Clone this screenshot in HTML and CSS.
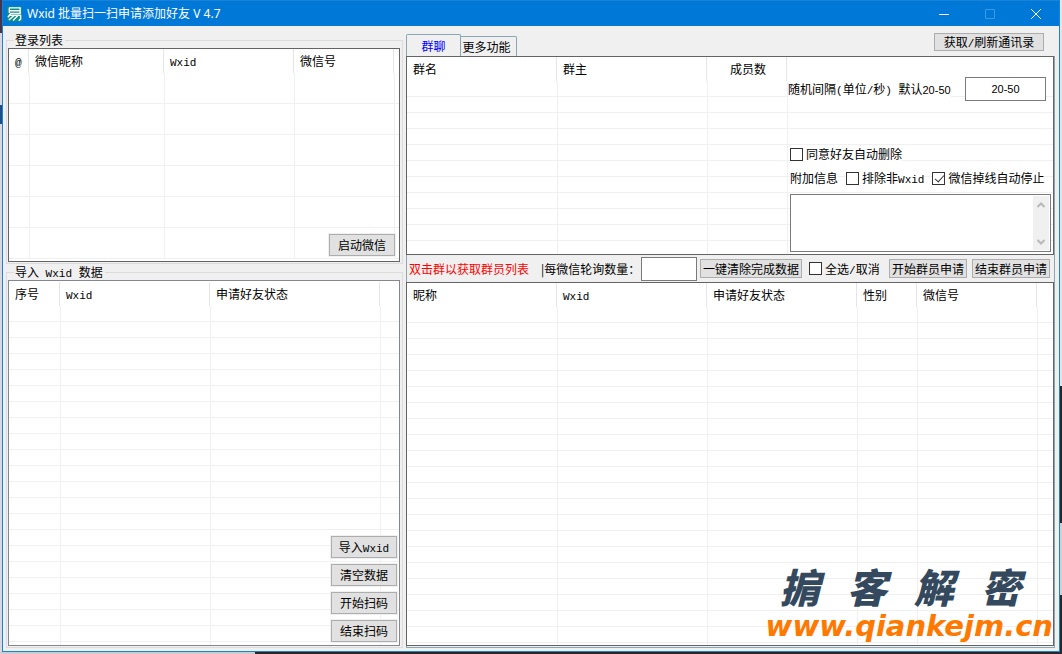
FILE: index.html
```html
<!DOCTYPE html>
<html lang="zh-CN">
<head>
<meta charset="utf-8">
<title>Wxid 批量扫一扫申请添加好友 V 4.7</title>
<link rel="stylesheet" href="styles.css">
</head>
<body>
<div class="window">
  <header class="titlebar">
    <svg class="app-icon" viewBox="0 0 16 16" aria-hidden="true">
      <rect width="16" height="16" fill="#0b8f86"/>
      <path d="M2 1.500H14V7.500H3.500M3 4.500H14M2.500 1.500V7M4 7.500L1 11.500M3 9.500H14.500V13.500L12.500 15M7.500 9.500L2 14.500M11.500 9.500L6.500 15" fill="none" stroke="#fff" stroke-width="1.5"/>
    </svg>
    <h1 class="title">Wxid 批量扫一扫申请添加好友 V 4.7</h1>
    <div class="caption-buttons">
      <button class="caption" aria-label="最小化"><svg viewBox="0 0 10 10"><path d="M0 5.5H10"/></svg></button>
      <button class="caption dim" aria-label="最大化" disabled><svg viewBox="0 0 10 10"><path d="M.5 .5H9.5V9.5H.5Z"/></svg></button>
      <button class="caption" aria-label="关闭"><svg viewBox="0 0 10 10"><path d="M0 0L10 10M10 0L0 10"/></svg></button>
    </div>
  </header>

  <main class="content">
    <div class="sidebar">
      <fieldset class="group">
        <legend>登录列表</legend>
        <div class="list logins">
          <table class="grid tall" data-rows="6">
            <colgroup><col class="w21"><col class="w135"><col class="w130"><col class="w100"><col></colgroup>
            <thead><tr><th><span class="half">@</span></th><th>微信昵称</th><th><span class="half">Wxid</span></th><th>微信号</th><th></th></tr></thead>
            <tbody></tbody>
          </table>
          <button class="btn launch">启动微信</button>
        </div>
      </fieldset>
      <fieldset class="group">
        <legend>导入<span class="half"> Wxid </span>数据</legend>
        <div class="list imports">
          <table class="grid" data-rows="22">
            <colgroup><col class="w52"><col class="w150"><col class="w170"><col></colgroup>
            <thead><tr><th>序号</th><th><span class="half">Wxid</span></th><th>申请好友状态</th><th></th></tr></thead>
            <tbody></tbody>
          </table>
          <div class="actions">
            <button class="btn">导入<span class="half">Wxid</span></button>
            <button class="btn">清空数据</button>
            <button class="btn">开始扫码</button>
            <button class="btn">结束扫码</button>
          </div>
        </div>
      </fieldset>
    </div>

    <div class="workspace">
      <div class="tabs">
        <button class="tab active">群聊</button>
        <button class="tab">更多功能</button>
        <button class="btn refresh">获取<span class="half">/</span>刷新通讯录</button>
      </div>
      <section class="panel">
        <div class="list groups">
          <table class="grid" data-rows="11">
            <colgroup><col class="w151"><col class="w150"><col class="w80"><col></colgroup>
            <thead><tr><th>群名</th><th>群主</th><th class="center">成员数</th><th></th></tr></thead>
            <tbody></tbody>
          </table>
          <form class="settings">
            <div class="setting interval">
              <label for="interval">随机间隔<span class="half">(</span>单位<span class="half">/</span>秒<span class="half">)&nbsp;</span>默认<span class="num">20-50</span></label>
              <input class="box num" id="interval" type="text" value="20-50">
            </div>
            <div class="setting">
              <label class="check"><input type="checkbox">同意好友自动删除</label>
            </div>
            <div class="setting extras">
              <label for="extra">附加信息</label>
              <label class="check"><input type="checkbox"><span>排除非<span class="half">Wxid</span></span></label>
              <label class="check"><input type="checkbox" checked>微信掉线自动停止</label>
            </div>
            <div class="memo">
              <textarea id="extra"></textarea>
              <div class="scroll">
                <button type="button" aria-label="向上"><svg viewBox="0 0 8 6"><path d="M.5 5L4 1.5L7.500 5"/></svg></button>
                <button type="button" aria-label="向下"><svg viewBox="0 0 8 6"><path d="M.5 1L4 4.500L7.500 1"/></svg></button>
              </div>
            </div>
          </form>
        </div>

        <div class="toolbar">
          <span class="hint">双击群以获取群员列表</span>
          <label for="poll">|每微信轮询数量：</label>
          <input class="box poll" id="poll" type="text">
          <button class="btn clear">一键清除完成数据</button>
          <label class="check all"><input type="checkbox"><span>全选<span class="half">/</span>取消</span></label>
          <button class="btn apply">开始群员申请</button>
          <button class="btn apply">结束群员申请</button>
        </div>

        <div class="list members">
          <table class="grid" data-rows="22">
            <colgroup><col class="w151"><col class="w150"><col class="w150"><col class="w60"><col class="w120"><col></colgroup>
            <thead><tr><th>昵称</th><th><span class="half">Wxid</span></th><th>申请好友状态</th><th>性别</th><th>微信号</th><th></th></tr></thead>
            <tbody></tbody>
          </table>
          <div class="brand">
            <div class="brand-name"><span>掮</span><span>客</span><span>解</span><span>密</span></div>
            <div class="brand-url">www.qiankejm.cn</div>
          </div>
        </div>
      </section>
    </div>
  </main>
</div>
<script src="script.js"></script>
</body>
</html>
```

FILE: styles.css
```css
* { box-sizing: border-box; }

body {
  margin: 0;
  height: 100vh;
  display: flex;
  padding: 0 2px 2px;
  overflow: hidden;
  background:
    linear-gradient(#c9ccd0, #c9ccd0) no-repeat left bottom / 24% 2px,
    linear-gradient(#2b2628, #2b2628) no-repeat right bottom / 76% 2px,
    linear-gradient(#e4e4e4 59%, #2b2628 59% 80%, #d0d0d0 80% 91%, #2b2628 91%) no-repeat right top / 2px 100%,
    linear-gradient(#43364a 5%, #d6d9dd 5% 16%, #1b4f86 16% 19%, #d6d9dd 19%);
  color: #000;
  font: 12px/16px "Noto Sans CJK SC", sans-serif;
}

button, input, textarea {
  font: inherit;
  color: inherit;
  margin: 0;
  padding: 0;
  border-radius: 0;
}

.half { font-family: "Liberation Mono", monospace; font-size: 11px; line-height: 12px; }
.num { font-family: "Liberation Sans", sans-serif; font-size: 11px; }

.window {
  flex: 1;
  min-width: 0;
  display: flex;
  flex-direction: column;
  border: 1px solid #1883d7;
  background: #f0f0f0;
}

.titlebar {
  flex: none;
  display: flex;
  align-items: center;
  height: 25px;
  padding-left: 4px;
  background: #0078d7;
  color: #fff;
}
.app-icon { width: 15px; height: 16px; }
.title {
  margin: 0 0 0 5px;
  font: 12px/16px "Noto Sans", "Noto Sans CJK SC", sans-serif;
}
.caption-buttons { display: flex; margin-left: auto; }
.caption {
  width: 46px;
  height: 25px;
  display: grid;
  place-items: center;
  border: 0;
  background: none;
}
.caption svg { width: 10px; height: 10px; fill: none; stroke: #fff; overflow: visible; }
.caption.dim svg { stroke: #3c98e0; }

.content {
  flex: 1;
  min-height: 0;
  display: grid;
  grid-template-columns: 397px minmax(0, 1fr);
  gap: 3px;
  padding: 0 4px 3px 3px;
}

.sidebar {
  display: grid;
  grid-template-rows: auto minmax(0, 1fr);
  min-height: 0;
  padding-top: 6px;
}
.group {
  display: flex;
  flex-direction: column;
  min-width: 0;
  min-height: 0;
  margin: 0;
  padding: 0 2px 1px 1px;
  border: 1px solid #dcdcdc;
}
.group legend { height: 16px; margin-left: 6px; padding: 0 2px 0 1px; }

.list {
  position: relative;
  overflow: hidden;
  min-height: 0;
  border: 1px solid #646464;
  background: #fff;
}
.logins { padding-bottom: 2px; }
.imports { flex: 1; padding-top: 1px; border-color: #828790; }

.grid { width: 100%; table-layout: fixed; border-collapse: separate; border-spacing: 0; }
.grid th {
  height: 24px;
  padding: 0 5px;
  font-weight: normal;
  text-align: left;
  white-space: nowrap;
  background: linear-gradient(#e5e5e5, #e5e5e5) no-repeat right 1px top 0 / 1px 100%;
}
.grid th:last-child { background: none; }
.grid th:first-child { padding-left: 6px; }
.grid .center { text-align: center; }
.grid td { height: 16px; padding: 0; border: 0 solid #f0f0f0; border-width: 0 1px 1px 0; }
.grid td:last-child { border-right: 0; }
.tall td { height: 31px; }
.w21 { width: 21px; }
.w52 { width: 52px; }
.w60 { width: 60px; }
.w80 { width: 80px; }
.w100 { width: 100px; }
.w120 { width: 120px; }
.w130 { width: 130px; }
.w135 { width: 135px; }
.w150 { width: 150px; }
.w151 { width: 151px; }
.w170 { width: 170px; }

.btn {
  width: 66px;
  height: 22px;
  border: 1px solid #adadad;
  background: #e1e1e1;
  box-shadow: 0 0 0 1px #f0f0f0;
  line-height: 16px;
  white-space: nowrap;
}
.launch { position: absolute; right: 4px; bottom: 5px; }
.actions {
  position: absolute;
  right: 2px;
  bottom: 3px;
  display: flex;
  flex-direction: column;
  gap: 6px;
}

.workspace { display: flex; flex-direction: column; min-width: 0; min-height: 0; }
.tabs { flex: none; display: flex; align-items: flex-end; height: 30px; }
.tab {
  width: 56px;
  height: 20px;
  padding-right: 4px;
  border: 1px solid #8ba6b5;
  border-width: 1px 1px 0 0;
  border-radius: 0 2px 0 0;
  background: #f0f0f0;
}
.tab.active { width: 55px; height: 22px; padding: 0; border-left-width: 1px; border-radius: 2px 2px 0 0; color: #00f; }
.refresh { width: 110px; height: 18px; margin: 0 11px 5px auto; box-shadow: none; }

.panel {
  flex: 1;
  min-height: 0;
  display: grid;
  grid-template-rows: 199px auto minmax(0, 1fr);
  padding-bottom: 1px;
  border: 1px solid #8ba6b5;
  border-top: 0;
}
.groups, .members { margin-left: -1px; }

.settings {
  position: absolute;
  top: 20px;
  left: 381px;
  right: 2px;
  display: flex;
  flex-direction: column;
}
.setting { display: flex; align-items: center; padding-left: 2px; margin-bottom: 8px; }
.setting label { background: #fff; white-space: nowrap; }
.interval { justify-content: space-between; padding: 0 5px 0 0; margin-bottom: 45px; }
.extras { gap: 8px; }
.box { border: 1px solid #7a7a7a; background: #fff; height: 24px; text-align: center; }
.interval .box { width: 81px; }

.check { display: flex; align-items: center; }
.check input {
  appearance: none;
  position: relative;
  width: 13px;
  height: 13px;
  margin-right: 3px;
  border: 1px solid #333;
  background: #fff;
}
.check input:checked::after {
  content: "";
  position: absolute;
  left: 4px;
  top: 0;
  width: 4px;
  height: 8px;
  border: solid #333;
  border-width: 0 1px 1px 0;
  transform: rotate(42deg);
}

.memo { display: flex; height: 58px; margin-left: 2px; padding: 1px; border: 1px solid #7a7a7a; background: #fff; }
.memo textarea { flex: 1; min-width: 0; border: 0; resize: none; overflow: hidden; outline: 0; }
.scroll { display: flex; flex-direction: column; justify-content: space-between; width: 16px; background: #f0f0f0; }
.scroll button { height: 17px; display: grid; place-items: center; border: 0; background: none; }
.scroll svg { width: 8px; height: 6px; fill: none; stroke: #b8b8b8; stroke-width: 2; }

.toolbar { display: flex; align-items: center; height: 27px; padding: 0 4px 0 2px; white-space: nowrap; }
.hint { margin-right: 12px; color: #f00; }
.poll { width: 56px; margin-right: 3px; }
.toolbar label[for="poll"] { flex: 0 0 100px; }
.clear { width: 102px; height: 19px; margin-right: 7px; box-shadow: none; }
.all { margin-right: auto; }
.apply { width: 78px; height: 19px; margin-left: 5px; box-shadow: none; }

.brand { position: absolute; right: 0; bottom: 3px; }
.brand-name {
  display: flex;
  justify-content: space-between;
  margin-bottom: 4px;
  padding: 0 32px 0 14px;
  color: #34495e;
  font-size: 40px;
  font-style: italic;
  font-weight: 900;
  line-height: 40px;
}
.brand-url { color: #ff7800; font: italic bold 29px/32px "DejaVu Sans", sans-serif; }
```

FILE: script.js
```js
document.querySelectorAll('table[data-rows]').forEach(function (table) {
  var columns = table.tHead.rows[0].cells.length;
  for (var i = 0; i < Number(table.dataset.rows); i++) {
    var row = table.tBodies[0].insertRow();
    for (var c = 0; c < columns; c++) row.insertCell();
  }
});
```
